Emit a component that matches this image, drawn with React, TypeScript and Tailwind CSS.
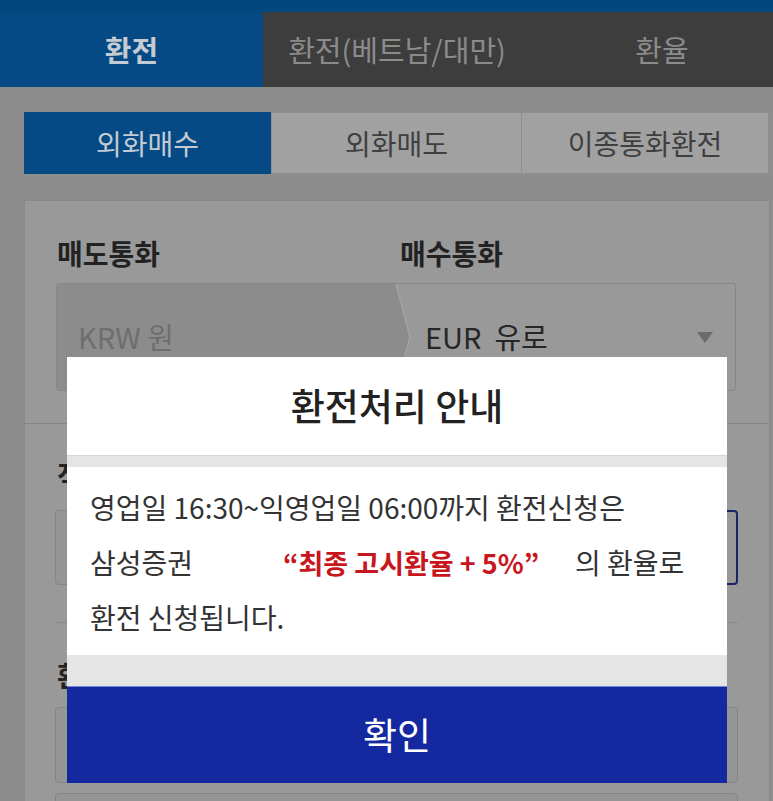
const font = "font-['Noto_Sans_CJK_KR','Noto_Sans',sans-serif]";

function TopTabs() {
  return (
    <div className="flex h-[75px] text-[29px]">
      <div className="flex w-[263px] items-center justify-center bg-[#054a84] font-bold text-[#c5cbd2]">환전</div>
      <div className="flex w-[268px] items-center justify-center bg-[#3d3d3d] text-[#8b8b8b]">환전(베트남/대만)</div>
      <div className="flex flex-1 items-center justify-center bg-[#3d3d3d] pl-[20px] text-[#8b8b8b]">환율</div>
    </div>
  );
}

function SubTabs() {
  return (
    <div className="ml-[24px] mr-[4px] mt-[25px] flex h-[62px] text-[28px]">
      <div className="flex w-[247px] items-center justify-center bg-[#054a84] text-[#c2cad3]">외화매수</div>
      <div className="flex w-[251px] items-center justify-center border border-[#8f8f8f] bg-[#a1a1a1] text-[#3f3f3f]">외화매도</div>
      <div className="flex flex-1 items-center justify-center border border-l-0 border-[#8f8f8f] bg-[#a1a1a1] text-[#3f3f3f]">이종통화환전</div>
    </div>
  );
}

function CurrencySelect() {
  return (
    <div className="mt-[13px] flex h-[108px] w-[680px] overflow-hidden rounded-[3px] border border-[#878787] text-[29px]">
      <div className="flex w-[338px] items-center bg-[#8c8c8c] pl-[21px] text-[#6e6e6e]">KRW 원</div>
      <svg width="16" height="106" viewBox="0 0 16 106" className="shrink-0">
        <polygon points="0,0 1,0 15,53 1,106 0,106" fill="#8c8c8c" />
        <polyline points="1,0 15,53 1,106" fill="none" stroke="#a6a6a6" strokeWidth="1.2" />
      </svg>
      <div className="flex flex-1 items-center justify-between pl-[14px] pr-[22px] text-[#262626]">
        <span>EUR&nbsp;&nbsp;유로</span>
        <svg width="16" height="11" viewBox="0 0 16 11">
          <polygon points="0,0 16,0 8,11" fill="#6b6b6b" />
        </svg>
      </div>
    </div>
  );
}

function Dialog() {
  return (
    <div className="absolute left-[67px] top-[357px] flex h-[426px] w-[660px] flex-col bg-white">
      <div className="flex h-[98px] items-center justify-center text-[37px] font-medium text-[#222]">환전처리 안내</div>
      <div className="h-[12px] border-t border-[#d6d6d6] bg-[#e5e5e5]" />
      <div className="flex-1 px-[23px] pt-[13px] text-[28px] leading-[55px] text-[#333]">
        <p>영업일 16:30~익영업일 06:00까지 환전신청은</p>
        <p className="flex">
          <span className="w-[193px]">삼성증권</span>
          <span className="w-[292px] text-[27px] font-bold text-[#c8161e]">“최종 고시환율 + 5%”</span>
          <span>의 환율로</span>
        </p>
        <p>환전 신청됩니다.</p>
      </div>
      <div className="h-[31px] bg-[#e5e5e5]" />
      <button className="flex h-[97px] items-center justify-center border-t border-[#6f86d6] bg-[#1428a0] text-[37px] text-white">확인</button>
    </div>
  );
}

export default function App() {
  return (
    <div className={`relative h-[801px] w-[773px] overflow-hidden bg-[#8d8d8d] ${font}`}>
      <div className="h-[12px] bg-[#03477f]" />
      <TopTabs />
      <SubTabs />

      <div className="ml-[24px] mr-[3px] mt-[26px] h-[700px] border border-[#888] bg-[#999999]">
        <section className="border-b border-[#858585] pb-[32px] pl-[31px] pt-[35px]">
          <div className="flex text-[28px] font-bold leading-[34px] text-[#222]">
            <span className="w-[344px] pl-[1px]">매도통화</span>
            <span>매수통화</span>
          </div>
          <CurrencySelect />
        </section>

        <section className="pl-[30px] pt-[34px]">
          <div className="pl-[2px] text-[28px] font-bold leading-[34px] text-[#222]">적용환율</div>
          <div className="mt-[18px] flex h-[75px] w-[683px]">
            <div className="w-[240px] rounded-l-[4px] border border-[#858585] bg-[#959595]" />
            <div className="flex-1 rounded-[4px] border-2 border-[#1b2466] bg-[#999999]" />
          </div>
          <div className="mt-[37px] h-px w-[683px] bg-[#8a8a8a]" />
          <div className="mt-[35px] pl-[2px] text-[28px] font-bold leading-[34px] text-[#222]">환전금액</div>
          <div className="mt-[15px] h-[76px] w-[683px] rounded-[4px] border border-[#858585] bg-[#959595]" />
          <div className="mt-[10px] h-[76px] w-[683px] rounded-[4px] border border-[#858585] bg-[#959595]" />
        </section>
      </div>

      <Dialog />
    </div>
  );
}
